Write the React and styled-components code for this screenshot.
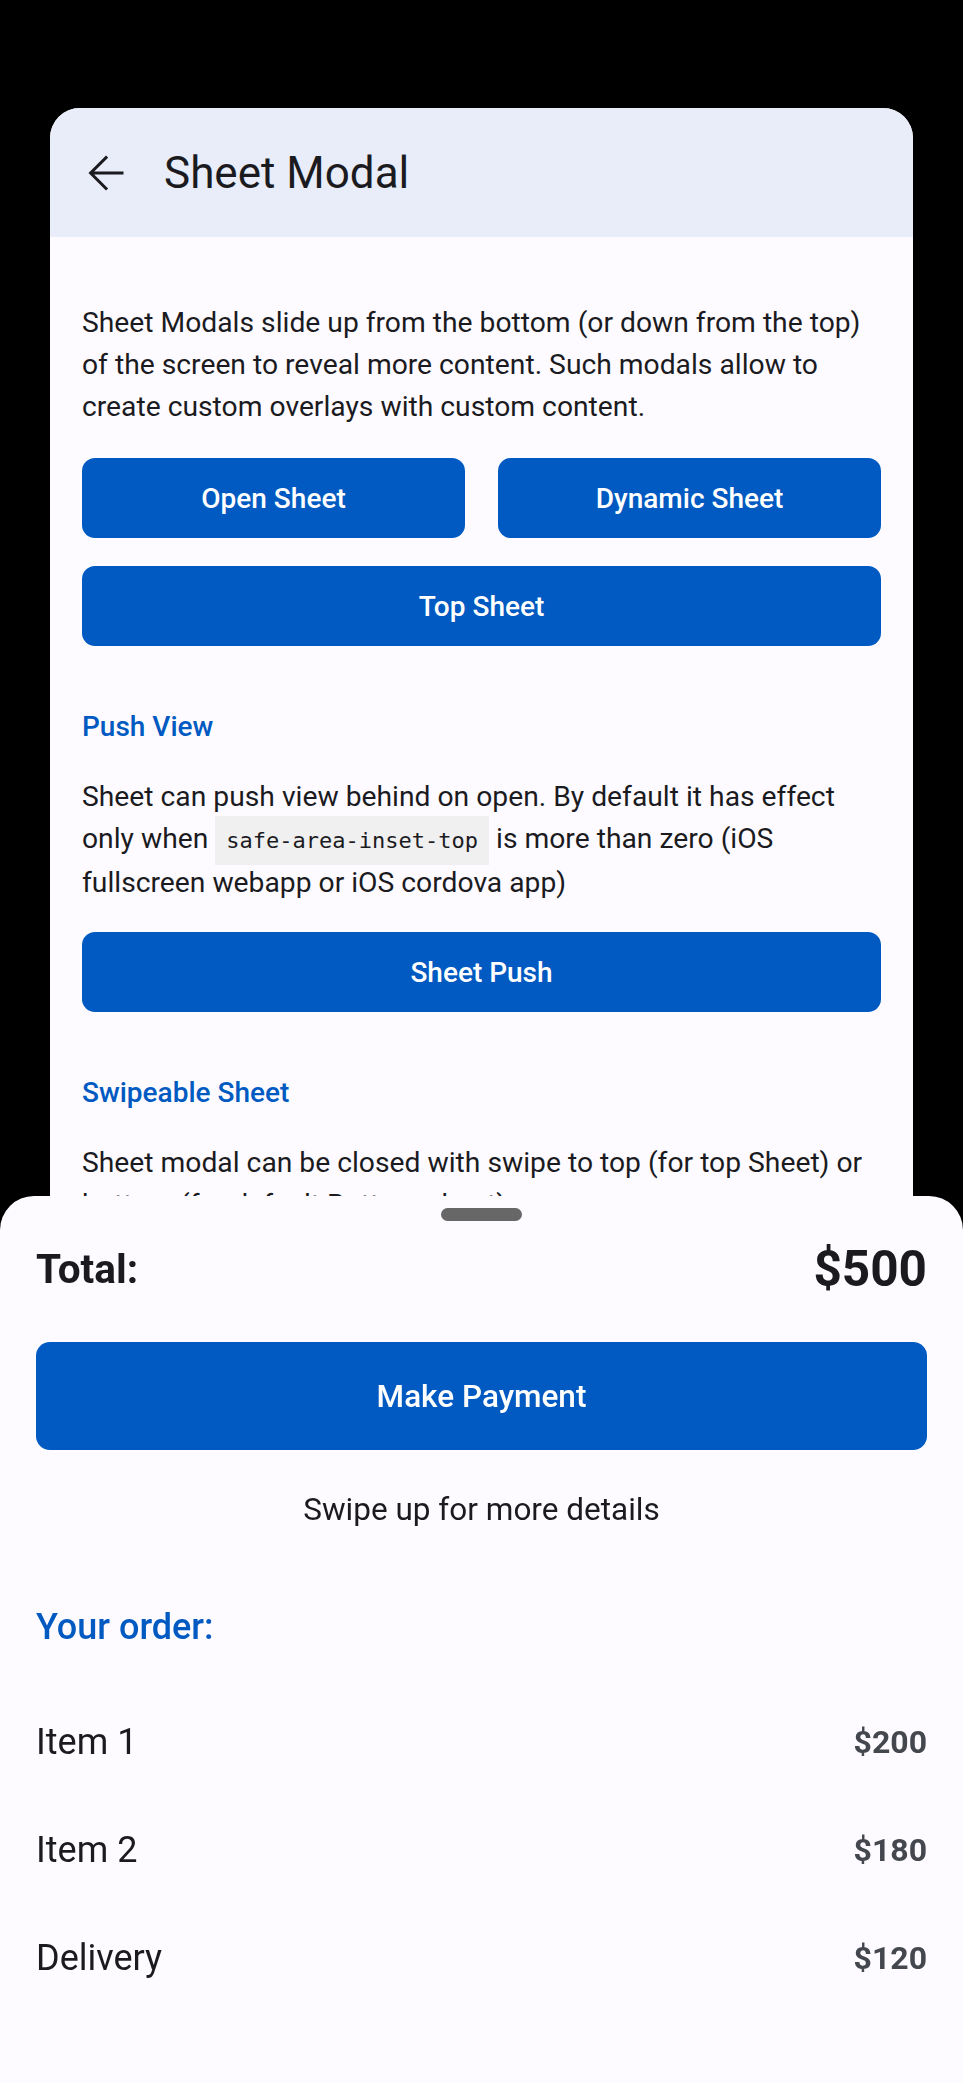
import React from "react";
import styled, { createGlobalStyle } from "styled-components";

const PRIMARY = "#005ac1";
const TEXT = "#1b1b1f";
const SURFACE = "#fdfbff";

const GlobalStyle = createGlobalStyle`
  html, body {
    margin: 0;
    padding: 0;
    background: #000;
  }
  body {
    font-family: Roboto, "Noto Sans", "Liberation Sans", sans-serif;
    -webkit-font-smoothing: antialiased;
  }
  * { box-sizing: border-box; }
`;

const Screen = styled.div`
  position: relative;
  width: 963px;
  height: 2083px;
  background: #000;
  overflow: hidden;
  padding-top: 108px;
`;

const Card = styled.div`
  margin: 0 50px;
  height: 1975px;
  background: ${SURFACE};
  border-radius: 30px 30px 0 0;
  overflow: hidden;
`;

const Navbar = styled.header`
  height: 129px;
  background: #e8edf9;
  display: flex;
  align-items: center;
  gap: 34px;
  padding: 0 32px;
`;

const BackButton = styled.button`
  width: 48px;
  height: 48px;
  padding: 0;
  border: 0;
  background: none;
  display: flex;
  align-items: center;
  justify-content: center;
  color: ${TEXT};
`;

const NavTitle = styled.h1`
  margin: 0;
  font-size: 44px;
  line-height: 44px;
  font-weight: 400;
  color: ${TEXT};
`;

const Content = styled.main`
  padding: 65px 32px 0;
  display: flex;
  flex-direction: column;
`;

const Paragraph = styled.p`
  margin: ${(p) => p.$top || 0}px 0 0;
  font-size: 28.25px;
  line-height: 42px;
  color: ${TEXT};
`;

const Code = styled.code`
  font-family: "DejaVu Sans Mono", "Liberation Mono", monospace;
  font-size: 22px;
  background: #f0f0f0;
  padding: 12px 11px;
  color: ${TEXT};
`;

const ButtonGrid = styled.div`
  display: grid;
  grid-template-columns: ${(p) => (p.$cols === 2 ? "1fr 1fr" : "1fr")};
  column-gap: 33px;
  margin-top: ${(p) => p.$top}px;
`;

const FillButton = styled.button`
  height: 80px;
  border: 0;
  border-radius: 13px;
  background: ${PRIMARY};
  color: #fff;
  font-family: Roboto, sans-serif;
  font-size: 28px;
  font-weight: 500;
  padding: 0;
`;

const BlockTitle = styled.h2`
  margin: 67px 0 0;
  font-size: 28px;
  line-height: 28px;
  font-weight: 500;
  color: ${PRIMARY};
`;

const Sheet = styled.section`
  position: fixed;
  left: 0;
  right: 0;
  bottom: 0;
  height: 887px;
  background: ${SURFACE};
  border-radius: 34px 34px 0 0;
  overflow: hidden;
`;

const SwipeHandle = styled.div`
  position: absolute;
  top: 12px;
  left: 50%;
  width: 81px;
  height: 13px;
  margin-left: -40.5px;
  border-radius: 7px;
  background: #676767;
`;

const TotalRow = styled.div`
  display: flex;
  justify-content: space-between;
  align-items: center;
  padding: 36px;
`;

const TotalText = styled.div`
  font-size: ${(p) => p.$size}px;
  line-height: 1.5;
  font-weight: 700;
  color: ${TEXT};
`;

const PayBlock = styled.div`
  padding: 0 36px 36px;
`;

const PayButton = styled.button`
  display: block;
  width: 100%;
  height: 108px;
  border: 0;
  border-radius: 14px;
  background: ${PRIMARY};
  color: #fff;
  font-family: Roboto, sans-serif;
  font-size: 31.5px;
  font-weight: 500;
`;

const Hint = styled.div`
  margin-top: 36px;
  text-align: center;
  font-size: 31.5px;
  line-height: 47.25px;
  color: ${TEXT};
`;

const OrderTitle = styled.h3`
  margin: 36px 36px 0;
  font-size: 36px;
  line-height: 43px;
  font-weight: 500;
  color: ${PRIMARY};
`;

const OrderList = styled.ul`
  list-style: none;
  margin: 39px 0 0;
  padding: 0;
`;

const OrderItem = styled.li`
  height: 108px;
  padding: 0 36px;
  display: flex;
  justify-content: space-between;
  align-items: center;
`;

const ItemTitle = styled.span`
  font-size: 36px;
  color: ${TEXT};
`;

const ItemPrice = styled.span`
  font-size: 32px;
  font-weight: 700;
  color: #45474f;
`;

const BackArrow = () => (
  <svg width="48" height="48" viewBox="0 0 24 24" fill="none">
    <path
      d="M20 12H4.8M12 4.3 4.3 12 12 19.7"
      stroke="currentColor"
      strokeWidth="1.5"
      strokeLinecap="square"
    />
  </svg>
);

const items = [
  { name: "Item 1", price: "$200" },
  { name: "Item 2", price: "$180" },
  { name: "Delivery", price: "$120" },
];

export default function App() {
  return (
    <>
      <GlobalStyle />
      <Screen>
        <Card>
          <Navbar>
            <BackButton aria-label="Back">
              <BackArrow />
            </BackButton>
            <NavTitle>Sheet Modal</NavTitle>
          </Navbar>
          <Content>
            <Paragraph>
              Sheet Modals slide up from the bottom (or down from the top) of the
              screen to reveal more content. Such modals allow to create custom
              overlays with custom content.
            </Paragraph>
            <ButtonGrid $cols={2} $top={30}>
              <FillButton>Open Sheet</FillButton>
              <FillButton>Dynamic Sheet</FillButton>
            </ButtonGrid>
            <ButtonGrid $top={28}>
              <FillButton>Top Sheet</FillButton>
            </ButtonGrid>

            <BlockTitle>Push View</BlockTitle>
            <Paragraph $top={35}>
              Sheet can push view behind on open. By default it has effect only
              when <Code>safe-area-inset-top</Code> is more than zero (iOS
              fullscreen webapp or iOS cordova app)
            </Paragraph>
            <ButtonGrid $top={28}>
              <FillButton>Sheet Push</FillButton>
            </ButtonGrid>

            <BlockTitle>Swipeable Sheet</BlockTitle>
            <Paragraph $top={35}>
              Sheet modal can be closed with swipe to top (for top Sheet) or
              bottom (for default Bottom sheet):
            </Paragraph>
            <ButtonGrid $top={29}>
              <FillButton>Swipe To Close</FillButton>
            </ButtonGrid>
            <ButtonGrid $top={28}>
              <FillButton>Swipe To Step</FillButton>
            </ButtonGrid>
          </Content>
        </Card>

        <Sheet>
          <SwipeHandle />
          <TotalRow>
            <TotalText $size={40.5}>Total:</TotalText>
            <TotalText $size={49.5}>$500</TotalText>
          </TotalRow>
          <PayBlock>
            <PayButton>Make Payment</PayButton>
            <Hint>Swipe up for more details</Hint>
          </PayBlock>
          <OrderTitle>Your order:</OrderTitle>
          <OrderList>
            {items.map((it) => (
              <OrderItem key={it.name}>
                <ItemTitle>{it.name}</ItemTitle>
                <ItemPrice>{it.price}</ItemPrice>
              </OrderItem>
            ))}
          </OrderList>
        </Sheet>
      </Screen>
    </>
  );
}
